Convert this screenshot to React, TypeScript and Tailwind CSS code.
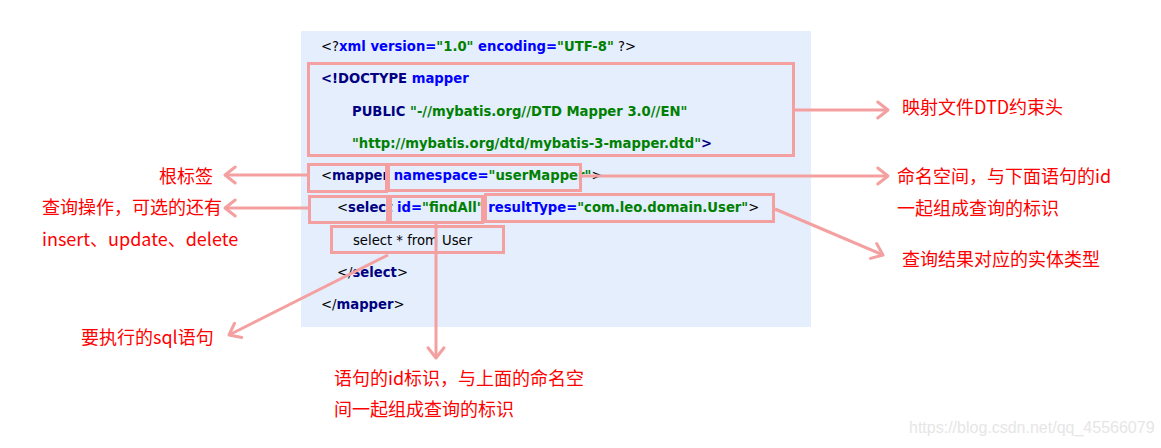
import React from 'react';

// colours used by the xml highlighting
const tagCls = 'font-bold text-[#000080]';
const attrCls = 'font-bold text-[#0000ff]';
const valCls = 'font-bold text-[#008000]';
const punctCls = 'font-normal text-black';

const PINK = '#f4a0a0';

const boxes = [
  { x: 307, y: 62, w: 488, h: 95 },
  { x: 307, y: 163, w: 81, h: 30 },
  { x: 387, y: 163, w: 195, h: 29 },
  { x: 308, y: 195, w: 81, h: 29 },
  { x: 389, y: 195, w: 95, h: 29 },
  { x: 484, y: 193, w: 291, h: 30 },
  { x: 330, y: 225, w: 175, h: 29 },
];

const arrows = [
  { x1: 795, y1: 110, x2: 888, y2: 110 },
  { x1: 582, y1: 176, x2: 888, y2: 176 },
  { x1: 775, y1: 209, x2: 883, y2: 255 },
  { x1: 307, y1: 175, x2: 225, y2: 175 },
  { x1: 308, y1: 208, x2: 225, y2: 208 },
  { x1: 388, y1: 255, x2: 229, y2: 335 },
  { x1: 436, y1: 224, x2: 436, y2: 358 },
];

function head(a: { x1: number; y1: number; x2: number; y2: number }) {
  const ang = Math.atan2(a.y2 - a.y1, a.x2 - a.x1);
  const L = 13;
  const s = (38 * Math.PI) / 180;
  const p1 = [a.x2 - L * Math.cos(ang - s), a.y2 - L * Math.sin(ang - s)];
  const p2 = [a.x2 - L * Math.cos(ang + s), a.y2 - L * Math.sin(ang + s)];
  return `${p1[0]},${p1[1]} ${a.x2},${a.y2} ${p2[0]},${p2[1]}`;
}

function Line({ indent = 0, children }: { indent?: number; children: React.ReactNode }) {
  return (
    <div className="h-[32.25px] flex items-center whitespace-pre" style={{ paddingLeft: indent }}>
      {children}
    </div>
  );
}

export default function App() {
  const cjk = "'Noto Sans CJK SC', 'Noto Sans', sans-serif";
  return (
    <div className="relative w-[1161px] h-[448px] bg-white overflow-hidden">
      {/* code panel */}
      <div className="ml-[301px] mt-[31px] w-[510px] h-[296px] bg-[#e4eefd] pl-[20px] text-[13.2px] font-['DejaVu_Sans',sans-serif]">
        <Line>
          <span className={punctCls}>&lt;?</span>
          <span className={attrCls}>xml version=</span>
          <span className={valCls}>"1.0"</span>
          <span className={attrCls}> encoding=</span>
          <span className={valCls}>"UTF-8"</span>
          <span className={punctCls}> ?&gt;</span>
        </Line>
        <Line>
          <span className={tagCls}>&lt;!DOCTYPE </span>
          <span className={attrCls}>mapper</span>
        </Line>
        <Line indent={31}>
          <span className={tagCls}>PUBLIC </span>
          <span className={valCls}>"-//mybatis.org//DTD Mapper 3.0//EN"</span>
        </Line>
        <Line indent={31}>
          <span className={valCls}>"http://mybatis.org/dtd/mybatis-3-mapper.dtd"</span>
          <span className={tagCls}>&gt;</span>
        </Line>
        <Line>
          <span className={punctCls}>&lt;</span>
          <span className={tagCls}>mapper </span>
          <span className={attrCls}>namespace=</span>
          <span className={valCls}>"userMapper"</span>
          <span className={punctCls}>&gt;</span>
        </Line>
        <Line indent={16}>
          <span className={punctCls}>&lt;</span>
          <span className={tagCls}>select </span>
          <span className={attrCls}>id=</span>
          <span className={valCls}>"findAll" </span>
          <span className={attrCls}>resultType=</span>
          <span className={valCls}>"com.leo.domain.User"</span>
          <span className={punctCls}>&gt;</span>
        </Line>
        <Line indent={32}>
          <span className={punctCls}>select * from User</span>
        </Line>
        <Line indent={16}>
          <span className={punctCls}>&lt;/</span>
          <span className={tagCls}>select</span>
          <span className={punctCls}>&gt;</span>
        </Line>
        <Line>
          <span className={punctCls}>&lt;/</span>
          <span className={tagCls}>mapper</span>
          <span className={punctCls}>&gt;</span>
        </Line>
      </div>

      {/* boxes and arrows drawn over the code */}
      <svg className="absolute left-0 top-0" width={1161} height={448}>
        {boxes.map((b, i) => (
          <rect key={i} x={b.x + 1.5} y={b.y + 1.5} width={b.w - 3} height={b.h - 3} fill="none" stroke={PINK} strokeWidth={3} />
        ))}
        {arrows.map((a, i) => (
          <g key={i}>
            <line x1={a.x1} y1={a.y1} x2={a.x2} y2={a.y2} stroke={PINK} strokeWidth={3} />
            <polyline points={head(a)} fill="none" stroke={PINK} strokeWidth={3} strokeLinecap="round" strokeLinejoin="round" />
          </g>
        ))}
      </svg>

      {/* annotations */}
      <div className="absolute text-[18px] leading-[24px] text-[#ff0000] whitespace-nowrap" style={{ fontFamily: cjk, left: 902, top: 94 }}>
        映射文件DTD约束头
      </div>
      <div className="absolute text-[18px] leading-[32px] text-[#ff0000] whitespace-nowrap" style={{ fontFamily: cjk, left: 897, top: 159 }}>
        <div>命名空间，与下面语句的id</div>
        <div>一起组成查询的标识</div>
      </div>
      <div className="absolute text-[18px] leading-[24px] text-[#ff0000] whitespace-nowrap" style={{ fontFamily: cjk, left: 902, top: 246 }}>
        查询结果对应的实体类型
      </div>
      <div className="absolute text-[18px] leading-[24px] text-[#ff0000] whitespace-nowrap" style={{ fontFamily: cjk, left: 159, top: 163 }}>
        根标签
      </div>
      <div className="absolute text-[18px] leading-[32px] text-[#ff0000] whitespace-nowrap" style={{ fontFamily: cjk, left: 42, top: 190 }}>
        <div>查询操作，可选的还有</div>
        <div>insert、update、delete</div>
      </div>
      <div className="absolute text-[18px] leading-[24px] text-[#ff0000] whitespace-nowrap" style={{ fontFamily: cjk, left: 81, top: 324 }}>
        要执行的sql语句
      </div>
      <div className="absolute text-[18px] leading-[31px] text-[#ff0000] whitespace-nowrap" style={{ fontFamily: cjk, left: 334, top: 362 }}>
        <div>语句的id标识，与上面的命名空</div>
        <div>间一起组成查询的标识</div>
      </div>

      {/* watermark */}
      <div className="absolute left-[909px] top-[419px] text-[16px] leading-[18px] text-[#e6e6e6] font-['Liberation_Sans',sans-serif] whitespace-nowrap">
        https://blog.csdn.net/qq_45566079
      </div>
    </div>
  );
}
